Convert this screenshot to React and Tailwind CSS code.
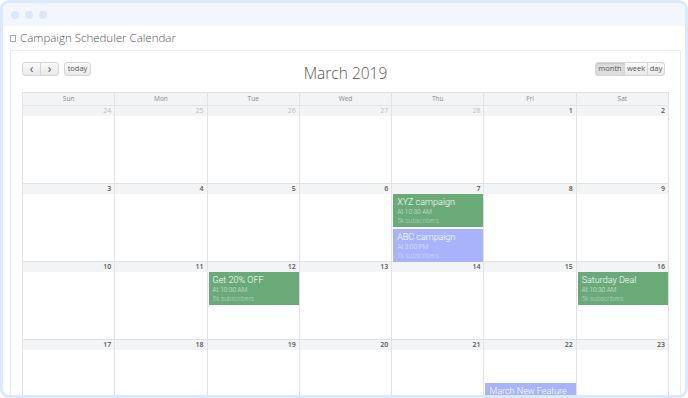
import React from 'react'

const days = ['Sun', 'Mon', 'Tue', 'Wed', 'Thu', 'Fri', 'Sat']

const weeks = [
  [24, 25, 26, 27, 28, 1, 2],
  [3, 4, 5, 6, 7, 8, 9],
  [10, 11, 12, 13, 14, 15, 16],
  [17, 18, 19, 20, 21, 22, 23],
]

const events = {
  7: [
    { title: 'XYZ campaign', time: 'At 10:30 AM', subs: '5k subscribers', tone: 'green' },
    { title: 'ABC campaign', time: 'At 3:00 PM', subs: '2k subscribers', tone: 'blue' },
  ],
  12: [{ title: 'Get 20% OFF', time: 'At 10:30 AM', subs: '5k subscribers', tone: 'green' }],
  16: [{ title: 'Saturday Deal', time: 'At 10:30 AM', subs: '5k subscribers', tone: 'green' }],
  22: [{ title: 'March New Feature', time: 'At 10:30 AM', subs: '5k subscribers', tone: 'blue', late: true }],
}

function EventCard({ ev }) {
  const bg = ev.tone === 'green' ? 'bg-[#6aaa78]' : 'bg-[#a8b3fb]'
  return (
    <div
      className={`mb-[2px] ml-px h-[33px] px-[4px] pt-[2px] ${bg} ${ev.late ? 'mt-[33px]' : ''}`}
      style={{ fontFamily: 'Roboto, sans-serif' }}
    >
      <div className="text-[9px] font-light leading-[12px] text-white">{ev.title}</div>
      <div className="text-[6.5px] font-light leading-[9px] text-white/65">{ev.time}</div>
      <div className="text-[6.5px] font-light leading-[9px] text-white/50">{ev.subs}</div>
    </div>
  )
}

function Btn({ children, className = '', active }) {
  return (
    <div
      className={`flex h-[14px] items-center justify-center border border-[#d6d6d6] text-[7.5px] text-[#555] ${
        active ? 'bg-[#dedede] shadow-[inset_0_1px_2px_rgba(0,0,0,0.12)]' : 'bg-gradient-to-b from-[#fafafa] to-[#e9e9e9]'
      } ${className}`}
    >
      {children}
    </div>
  )
}

export default function App() {
  return (
    <div className="h-[398px] w-[688px] overflow-hidden bg-white" style={{ fontFamily: '"Open Sans", sans-serif' }}>
      <div className="flex h-full flex-col overflow-hidden rounded-[9px] border-[3px] border-[#dce8fc] bg-white">
        <div className="flex h-[23px] shrink-0 items-center gap-[6px] bg-[#f3f7fd] pl-[8px]">
          <span className="h-[8px] w-[8px] rounded-full bg-[#dbe6fa]" />
          <span className="h-[8px] w-[8px] rounded-full bg-[#dbe6fa]" />
          <span className="h-[8px] w-[8px] rounded-full bg-[#dbe6fa]" />
        </div>

        <div className="flex h-[24px] shrink-0 items-center pl-[7px] text-[11.5px] font-light text-[#555]">
          <span className="mr-[4px] inline-block h-[7px] w-[6px] border border-[#aaa]" />
          Campaign Scheduler Calendar
        </div>

        <div className="ml-[7px] w-[671px] flex-1 border border-[#ececec] px-[11px] pt-[11px]">
          <div className="relative flex h-[30px] items-start justify-between">
            <div className="flex gap-[5px]">
              <div className="flex">
                <Btn className="w-[19px] rounded-l-[3px] text-[12px] leading-none">&lsaquo;</Btn>
                <Btn className="-ml-px w-[19px] rounded-r-[3px] text-[12px] leading-none">&rsaquo;</Btn>
              </div>
              <Btn className="w-[27px] rounded-[3px]">today</Btn>
            </div>
            <div className="absolute left-1/2 top-0 -translate-x-1/2 text-[15.5px] font-light leading-[22px] text-[#555]">
              March 2019
            </div>
            <div className="mr-[4px] flex">
              <Btn active className="w-[30px] rounded-l-[3px]">month</Btn>
              <Btn className="-ml-px w-[24px]">week</Btn>
              <Btn className="-ml-px w-[18px] rounded-r-[3px]">day</Btn>
            </div>
          </div>

          <div className="border-l border-t border-[#e3e3e3]">
            <div className="grid grid-cols-7">
              {days.map((d) => (
                <div
                  key={d}
                  className="flex h-[13px] items-center justify-center border-b border-r border-[#e3e3e3] bg-[#f3f4f5] text-[6.5px] text-[#888]"
                >
                  {d}
                </div>
              ))}
            </div>
            {weeks.map((w, wi) => (
              <div key={wi} className="grid grid-cols-7">
                {w.map((n, di) => {
                  const other = wi === 0 && n > 20
                  return (
                    <div key={di} className="h-[78px] border-b border-r border-[#e3e3e3]">
                      <div
                        className={`h-[10px] bg-[#f3f4f5] pr-[3px] text-right text-[7px] leading-[10px] ${
                          other ? 'text-[#bbb]' : 'font-semibold text-[#555]'
                        }`}
                      >
                        {n}
                      </div>
                      {!other && (events[n] || []).map((ev, i) => <EventCard key={i} ev={ev} />)}
                    </div>
                  )
                })}
              </div>
            ))}
          </div>
        </div>
      </div>
    </div>
  )
}
